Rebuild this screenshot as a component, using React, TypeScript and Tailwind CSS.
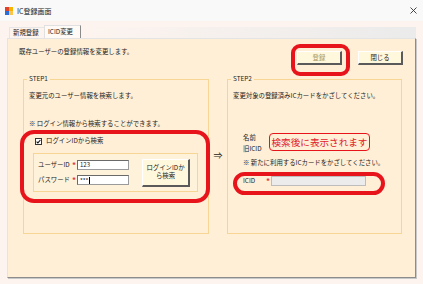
import React from 'react';

const font = "font-['Noto_Sans_CJK_JP','Noto_Sans',sans-serif]";

// red annotation frame drawn over the real controls
const Mark: React.FC<{ className: string }> = ({ className }) => (
  <div className={`pointer-events-none absolute border-[4px] border-[#e8141c] ${className}`} />
);

const Star = () => <span className="w-[5px] text-[8px] leading-[8px] font-bold text-[#e23a3a]">*</span>;

const App: React.FC = () => {
  return (
    <div className={`w-[423px] h-[284px] bg-[#fdf4ef] text-[6.4px] leading-[8px] text-[#222] overflow-hidden ${font}`}>
      {/* Title bar */}
      <div className="h-[21px] bg-[#f9f9f9] flex items-center pl-[5px] pr-[6px]">
        <svg width="8" height="8" viewBox="0 0 8 8" className="mr-[4px]">
          <rect x="0" y="0" width="4" height="4" fill="#e2402a" />
          <rect x="4" y="0" width="4" height="4" fill="#f5b400" />
          <rect x="0" y="4" width="4" height="4" fill="#2a6fd8" />
          <rect x="4" y="4" width="4" height="4" fill="#f7c64a" />
        </svg>
        <span className="text-[7px]">IC登録画面</span>
        <svg width="7" height="7" viewBox="0 0 7 7" className="ml-auto">
          <path d="M0.5 0.5 L6.5 6.5 M6.5 0.5 L0.5 6.5" stroke="#333" strokeWidth="0.9" />
        </svg>
      </div>

      {/* Tabs */}
      <div className="mt-[4px] h-[13px] flex items-end pl-[9px] pr-[7px]">
        <div className="h-[11px] w-[35px] flex items-center pl-[3px] border-t border-l border-[#e6e6e6]">新規登録</div>
        <div className="h-[13px] w-[37px] flex items-center pl-[3px] bg-[#fffaf6] border-t border-l border-[#e0e0e0] border-r border-r-[#8a8a8a]">ICID変更</div>
        <div className="flex-1 h-[11px] bg-linear-to-r from-[#fdf4ef] to-[#ebebeb]" />
      </div>

      {/* Panel */}
      <div className="mx-[7px] h-[240px] bg-[#ffefd6] border-t border-l border-[#e4e4e4] border-r border-b border-r-[#8c8c8c] border-b-[#8c8c8c] shadow-[1px_1px_0_#c8c8c8]">
        <div className="flex justify-between pl-[11px] pr-[12px]">
          <div className="pt-[9px]">既存ユーザーの登録情報を変更します。</div>
          <div className="pt-[12px] flex gap-[16px]">
            <div className="relative">
              <button className="w-[45px] h-[14px] bg-[#fff8dc] text-[#a59a68] border-t border-l border-white border-r-2 border-b-2 border-r-[#5a5a5a] border-b-[#5a5a5a]">登録</button>
              <Mark className="-left-[6px] -right-[8px] -top-[7px] -bottom-[11px] rounded-[9px]" />
            </div>
            <button className="w-[45px] h-[14px] bg-[#fff8dc] border-t border-l border-white border-r-2 border-b-2 border-r-[#5a5a5a] border-b-[#5a5a5a]">閉じる</button>
          </div>
        </div>

        <div className="mt-[10px] pl-[15px] flex items-start">
          {/* STEP1 */}
          <fieldset className="w-[186px] h-[159px] border border-[#f7d594]">
            <legend className="ml-[3px] px-[2px]">STEP1</legend>
            <div className="pl-[5px] mt-[9px]">変更元のユーザー情報を検索します。</div>
            <div className="pl-[5px] mt-[20px]">※ ログイン情報から検索することができます。</div>
            <div className="relative ml-[9px] mr-[10px] mt-[9px]">
              <div className="flex items-center h-[8px] pl-[2px]">
                <svg width="7" height="7" viewBox="0 0 7 7" className="mr-[4px]">
                  <rect x="0.5" y="0.5" width="6" height="6" fill="#fff" stroke="#333" />
                  <path d="M1.6 3.6 L2.9 4.9 L5.4 2" stroke="#111" strokeWidth="1.1" fill="none" />
                </svg>
                <span>ログインIDから検索</span>
              </div>
              <div className="mt-[8px] h-[39px] bg-[#fff2db] border border-[#f7d594] flex items-center pl-[4px] pr-[7px]">
                <div className="flex flex-col gap-[5px]">
                  <div className="flex items-center h-[10px]">
                    <span className="w-[34px]">ユーザーID</span>
                    <Star />
                    <div className="w-[52px] h-[10px] bg-white border border-[#9a9a9a] border-t-[#6a6a6a] border-l-[#6a6a6a] text-[6px] leading-[8px] pl-[2px]">123</div>
                  </div>
                  <div className="flex items-center h-[10px]">
                    <span className="w-[34px]">パスワード</span>
                    <Star />
                    <div className="w-[52px] h-[10px] bg-white border border-[#9a9a9a] border-t-[#6a6a6a] border-l-[#6a6a6a] text-[6px] leading-[9px] pl-[2px] flex items-center">
                      ***<span className="ml-[1px] w-px h-[7px] bg-black" />
                    </div>
                  </div>
                </div>
                <button className="ml-auto w-[48px] h-[28px] bg-[#fff8dc] border-t border-l border-white border-r-2 border-b-2 border-r-[#5a5a5a] border-b-[#5a5a5a] leading-[8px]">
                  ログインIDか<br />ら検索
                </button>
              </div>
              <Mark className="-left-[13px] -right-[12px] -top-[7px] -bottom-[11px] rounded-[14px]" />
            </div>
          </fieldset>

          <div className="w-[18px] mt-[76px] text-center text-[9px] leading-[9px]">⇒</div>

          {/* STEP2 */}
          <fieldset className="w-[175px] h-[159px] border border-[#f7d594]">
            <legend className="ml-[3px] px-[2px]">STEP2</legend>
            <div className="pl-[5px] mt-[9px]">変更対象の登録済みICカードをかざしてください。</div>
            <div className="mt-[33px] pl-[15px] flex items-start">
              <div className="w-[26px] pt-[1px] flex flex-col gap-[3px]">
                <span>名前</span>
                <span>旧ICID</span>
              </div>
              <div className="w-[101px] h-[18px] border border-[#e8141c] rounded-[4px] text-[#e0202a] text-[9.6px] leading-[16px] text-center">検索後に表示されます</div>
            </div>
            <div className="mt-[6px] pl-[15px]">※ 新たに利用するICカードをかざしてください。</div>
            <div className="relative ml-[15px] w-[123px] mt-[9px] flex items-center h-[10px]">
              <span className="w-[23px]">ICID</span>
              <Star />
              <div className="w-[95px] h-[10px] bg-[#ececec] border border-[#bdbdbd]" />
              <Mark className="-left-[10px] -right-[19px] -top-[4px] -bottom-[9px] rounded-[12px]" />
            </div>
          </fieldset>
        </div>
      </div>
    </div>
  );
};

export default App;
